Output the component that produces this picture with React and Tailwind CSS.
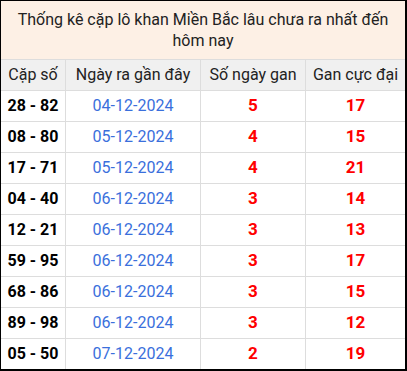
const rows = [
  { pair: '28 - 82', date: '04-12-2024', days: 5, max: 17 },
  { pair: '08 - 80', date: '05-12-2024', days: 4, max: 15 },
  { pair: '17 - 71', date: '05-12-2024', days: 4, max: 21 },
  { pair: '04 - 40', date: '06-12-2024', days: 3, max: 14 },
  { pair: '12 - 21', date: '06-12-2024', days: 3, max: 13 },
  { pair: '59 - 95', date: '06-12-2024', days: 3, max: 17 },
  { pair: '68 - 86', date: '06-12-2024', days: 3, max: 15 },
  { pair: '89 - 98', date: '06-12-2024', days: 3, max: 12 },
  { pair: '05 - 50', date: '07-12-2024', days: 2, max: 19 },
]

export default function App() {
  return (
    <div className="w-[407px] h-[371px] bg-white border-l border-t border-r-2 border-b-2 border-black font-['Roboto',sans-serif] text-[#222]">
      <div className="h-[59px] bg-[#fdf0e5] border-b border-[#dddddd] flex items-center justify-center px-2 text-center text-[16px] leading-[21px]">
        Thống kê cặp lô khan Miền Bắc lâu chưa ra nhất đến hôm nay
      </div>
      <div className="grid grid-cols-[64px_134px_104px_1fr] gap-px bg-[#dddddd]">
        {['Cặp số', 'Ngày ra gần đây', 'Số ngày gan', 'Gan cực đại'].map((h) => (
          <div key={h} className="h-[30px] bg-[#f0f0f0] flex items-center justify-center text-[16px]">
            {h}
          </div>
        ))}
        {rows.map((r) => (
          <div key={r.pair} className="contents">
            <div className="h-[30px] bg-white flex items-center justify-center text-[16px] font-bold text-black">
              {r.pair}
            </div>
            <div className="h-[30px] bg-white flex items-center justify-center text-[16px] text-[#3a6fdc]">
              {r.date}
            </div>
            <div className="h-[30px] bg-white flex items-center justify-center text-[17px] font-bold text-[#ff0000]">
              {r.days}
            </div>
            <div className="h-[30px] bg-white flex items-center justify-center text-[17px] font-bold text-[#ff0000]">
              {r.max}
            </div>
          </div>
        ))}
      </div>
    </div>
  )
}
